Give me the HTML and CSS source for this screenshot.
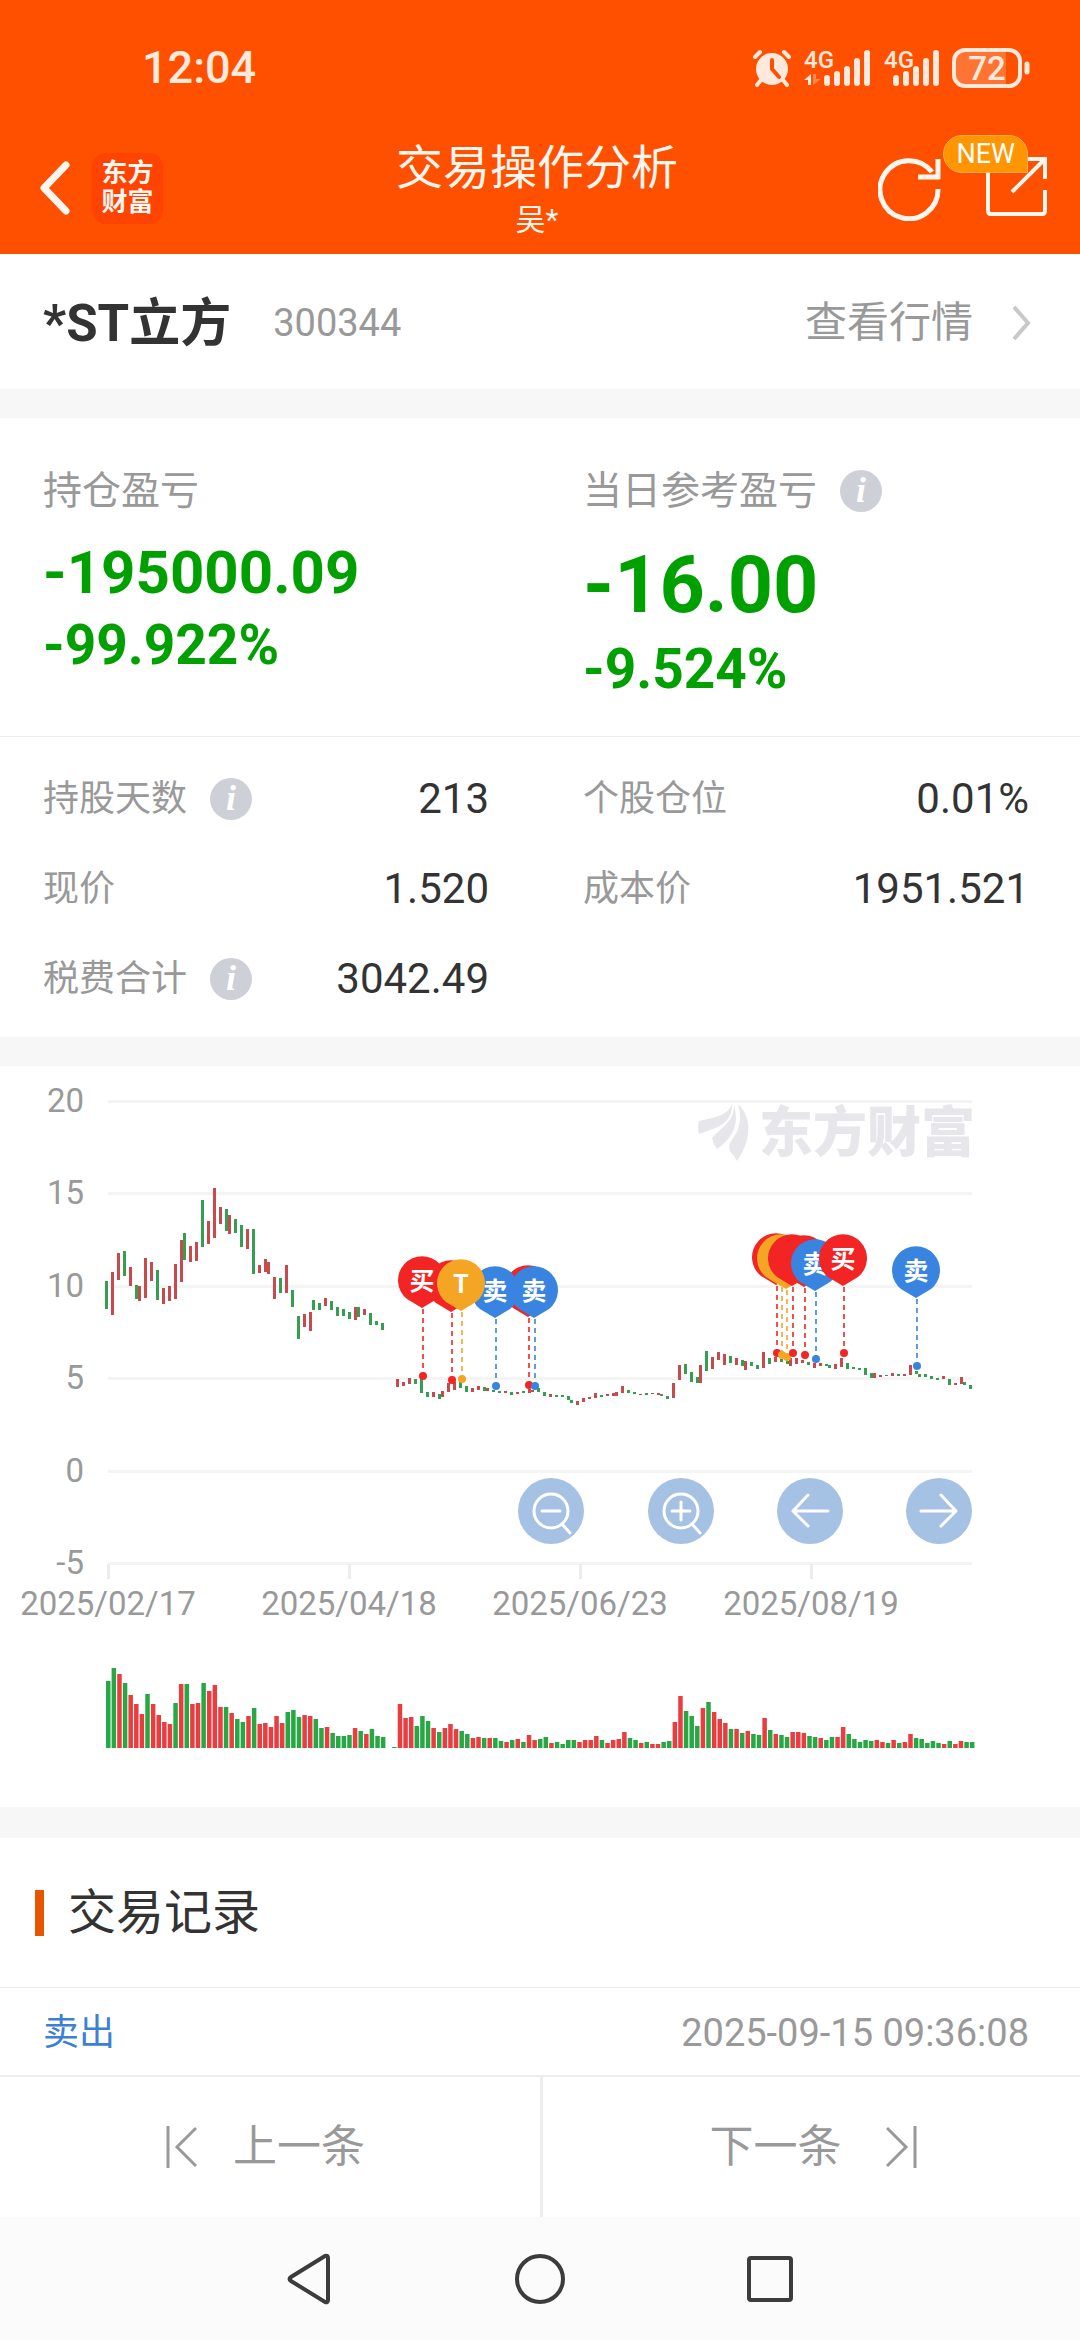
FILE: index.html
```html
<!DOCTYPE html>
<html lang="zh-CN">
<head>
    <meta charset="UTF-8">
    <meta name="viewport" content="width=device-width, initial-scale=1.0">
    <title>交易操作分析</title>
    <link rel="stylesheet" href="styles.css">
</head>
<body>
    <header class="header">
        <div class="status-bar">
            <span class="clock">12:04</span>
            <div class="status-icons">
                <svg width="40" height="44" viewBox="0 -4 40 44">
                    <g fill="none" stroke="#ffe9dd" stroke-width="4" stroke-linecap="round">
                        <path d="M3 9l5-5M37 9l-5-5M9 32l-4 5M31 32l4 5"/>
                    </g>
                    <circle cx="20" cy="21" r="16" fill="#ffe9dd"/>
                    <path d="M20 12v9l7 8" fill="none" stroke="#ff5000" stroke-width="4" stroke-linecap="round" stroke-linejoin="round"/>
                </svg>
                <svg width="68" height="44" viewBox="0 -4 68 44">
                    <text class="net-label" x="0" y="20">4G</text>
                    <path d="M7 26v11H4v-5H0z" fill="#ffe9dd"/>
                    <path d="M9 37V26h3v5h5z" fill="#ff8a50"/>
                    <path d="M23 30v5M33 26v9M43 21v14M53 13v22M63 5v30" stroke="#ffe9dd" stroke-width="6" stroke-linecap="round"/>
                </svg>
                <svg width="56" height="44" viewBox="0 -4 56 44">
                    <text class="net-label" x="0" y="20">4G</text>
                    <path d="M12 30v5M22 26v9M32 21v14M42 13v22M52 5v30" stroke="#ffe9dd" stroke-width="6" stroke-linecap="round"/>
                </svg>
                <svg width="80" height="44" viewBox="0 -4 80 44">
                    <path d="M12 3H54V37H12Q3 37 3 28V12Q3 3 12 3z" fill="#ff7333"/>
                    <rect x="2" y="2" width="66" height="36" rx="11" fill="none" stroke="#ffe9dd" stroke-width="4"/>
                    <path d="M75 16v8" stroke="#ffe9dd" stroke-width="5" stroke-linecap="round"/>
                    <text class="battery-label" x="35" y="32">72</text>
                </svg>
            </div>
        </div>
        <div class="title-bar">
            <div class="title-left">
                <button class="icon-btn" aria-label="返回">
                    <svg width="44" height="54" viewBox="-12 0 44 54"><path d="M28 4L6 27l22 23" fill="none" stroke="#fff6f0" stroke-width="7" stroke-linecap="round" stroke-linejoin="round"/></svg>
                </button>
                <div class="brand">东方<br>财富</div>
            </div>
            <div class="title-center">
                <h1>交易操作分析</h1>
                <p>吴*</p>
            </div>
            <div class="title-right">
                <button class="icon-btn" aria-label="刷新">
                    <svg width="64" height="66" viewBox="0 0 64 66"><path d="M60 34a29 29 0 1 1-6-17M60 4v20M40 22h22" fill="none" stroke="#fff6f0" stroke-width="5"/></svg>
                </button>
                <button class="icon-btn share" aria-label="分享">
                    <svg width="64" height="66" viewBox="0 0 64 66"><path d="M4 10v46q0 3 3 3h51q3 0 3-3V35M61 24V4H42M61 4L28 37" fill="none" stroke="#fff6f0" stroke-width="4"/></svg>
                    <span class="badge">NEW</span>
                </button>
            </div>
        </div>
    </header>

    <section class="stock">
        <h2>*ST立方</h2>
        <span class="code">300344</span>
        <a class="quote-link" href="#">查看行情
            <svg width="18" height="36" viewBox="0 0 18 36"><path d="M1 2l14 16L1 34" fill="none" stroke="#c8c8c8" stroke-width="4"/></svg>
        </a>
    </section>

    <section class="panel">
        <div class="profit">
            <div class="profit-col">
                <div class="label large">持仓盈亏</div>
                <div class="amount">-195000.09</div>
                <div class="percent">-99.922%</div>
            </div>
            <div class="profit-col">
                <div class="label large">当日参考盈亏 <i class="info">i</i></div>
                <div class="amount today">-16.00</div>
                <div class="percent">-9.524%</div>
            </div>
        </div>
        <div class="metrics">
            <div class="metric"><span class="label">持股天数 <i class="info">i</i></span><b>213</b></div>
            <div class="metric"><span class="label">个股仓位</span><b>0.01%</b></div>
            <div class="metric"><span class="label">现价</span><b>1.520</b></div>
            <div class="metric"><span class="label">成本价</span><b>1951.521</b></div>
            <div class="metric"><span class="label">税费合计 <i class="info">i</i></span><b>3042.49</b></div>
        </div>
    </section>

    <section class="panel chart">
        <svg class="chart-svg" viewBox="0 66 1080 741">
            <g id="grid"></g>
            <g fill="#e6e6eb">
                <path d="M732 104C728 116 712 118 699 121Q697 127 699 134C716 128 733 124 732 104z"/>
                <path d="M734 105C734 122 721 128 712 138Q713 144 717 149C731 139 740 127 734 105z"/>
                <path d="M738 104C753 118 751 141 737 161C734 154 729 153 729 146C732 136 745 130 738 104z"/>
                <text class="watermark" x="759" y="152">东方财富</text>
            </g>
            <g id="candles"></g>
            <g id="volumes"></g>
            <g id="pins"></g>
        </svg>
        <div class="chart-tools">
            <button aria-label="缩小"><svg viewBox="0 0 66 66"><circle cx="33" cy="33" r="17"/><path d="M24 33h18M44 46l8 9"/></svg></button>
            <button aria-label="放大"><svg viewBox="0 0 66 66"><circle cx="33" cy="33" r="17"/><path d="M24 33h18M33 24v18M44 46l8 9"/></svg></button>
            <button aria-label="向左"><svg viewBox="0 0 66 66"><path d="M51 33H16M31 17L16 33l15 15"/></svg></button>
            <button aria-label="向右"><svg viewBox="0 0 66 66"><path d="M15 33h35M35 17l15 16-15 15"/></svg></button>
        </div>
    </section>

    <section class="panel records">
        <h3>交易记录</h3>
        <div class="record">
            <span class="side">卖出</span>
            <time>2025-09-15 09:36:08</time>
        </div>
    </section>

    <div class="pager">
        <button>
            <svg width="32" height="44" viewBox="0 0 32 44"><path d="M3 1v42M31 3L12 22l19 19" fill="none" stroke="#999" stroke-width="3"/></svg>
            上一条
        </button>
        <button>
            下一条
            <svg width="32" height="44" viewBox="0 0 32 44"><path d="M29 1v42M1 3l19 19L1 41" fill="none" stroke="#999" stroke-width="3"/></svg>
        </button>
    </div>

    <nav class="system-nav">
        <button class="icon-btn" aria-label="返回"><svg width="52" height="52" viewBox="0 0 52 52"><path d="M41 3L7 24q-3 2 0 4l34 21q3 1 3-2V5q0-3-3-2z"/></svg></button>
        <button class="icon-btn" aria-label="主页"><svg width="52" height="52" viewBox="0 0 52 52"><circle cx="26" cy="26" r="23"/></svg></button>
        <button class="icon-btn" aria-label="最近任务"><svg width="52" height="52" viewBox="0 0 52 52"><rect x="5" y="5" width="42" height="42" rx="2"/></svg></button>
    </nav>

    <script src="chart.js"></script>
</body>
</html>
```
FILE: styles.css
```css
* {
    margin: 0;
    padding: 0;
    box-sizing: border-box;
}

body {
    font-family: Roboto, "Noto Sans CJK SC", sans-serif;
    line-height: 1.2;
    background: #f7f7f7;
    color: #333;
    min-height: 100vh;
    display: flex;
    flex-direction: column;
}

button {
    font-family: inherit;
    line-height: inherit;
    background: none;
    border: none;
    cursor: pointer;
}

svg {
    display: block;
}

/* header */

.header {
    background: #ff5000;
    color: #fff6f0;
    height: 254px;
}

.status-bar {
    display: flex;
    justify-content: space-between;
    align-items: flex-end;
    padding: 44px 48px 0 142px;
}

.clock {
    font-size: 45px;
    line-height: 40px;
    color: #ffe9dd;
    font-weight: 500;
}

.status-icons {
    display: flex;
    gap: 12px;
}

.net-label {
    font-size: 24px;
    font-weight: 500;
    fill: #ffe9dd;
}

.battery-label {
    font-size: 33px;
    font-weight: 500;
    fill: #ffe9dd;
    text-anchor: middle;
}

.title-bar {
    display: grid;
    grid-template-columns: 1fr auto 1fr;
    align-items: center;
    padding: 48px 32px 0 26px;
}

.title-left,
.title-right {
    display: flex;
    align-items: center;
    gap: 22px;
}

.title-right {
    justify-content: flex-end;
    gap: 42px;
}

.brand {
    width: 71px;
    height: 71px;
    padding-top: 6px;
    border-radius: 14px;
    background: #ff4300;
    font-size: 26px;
    line-height: 29px;
    font-weight: 700;
    text-align: center;
}

.title-center {
    text-align: center;
}

.title-center h1 {
    font-size: 47px;
    line-height: 64px;
    font-weight: 400;
}

.title-center p {
    font-size: 30px;
    line-height: 40px;
}

.share {
    position: relative;
}

.badge {
    position: absolute;
    right: 20px;
    top: -20px;
    padding: 0 12px;
    font-size: 27px;
    line-height: 36px;
    color: #fff;
    background: #ff9500;
    border: 1px solid #ffb04d;
    border-radius: 20px 20px 0 20px;
}

/* stock row */

.stock {
    display: flex;
    align-items: center;
    height: 135px;
    padding: 4px 49px 0 43px;
    background: #fff;
}

.stock h2 {
    font-size: 51px;
    font-weight: 700;
}

.code {
    margin-left: 42px;
    font-size: 38px;
    color: #999;
}

.quote-link {
    display: flex;
    align-items: center;
    gap: 40px;
    margin-left: auto;
    font-size: 42px;
    color: #999;
    text-decoration: none;
}

/* panels */

.panel {
    margin-top: 29px;
    background: #fff;
}

.label {
    display: flex;
    align-items: center;
    gap: 23px;
    font-size: 36px;
    line-height: 44px;
    color: #999;
}

.label.large {
    font-size: 39px;
}

.info {
    width: 42px;
    height: 42px;
    border-radius: 50%;
    background: #cdd0d6;
    color: #fff;
    font: italic bold 36px/40px "Liberation Serif", serif;
    text-align: center;
}

.profit,
.metrics {
    display: grid;
    grid-template-columns: 1fr 1fr;
}

.profit {
    height: 319px;
    padding-top: 51px;
    border-bottom: 1px solid #ededed;
}

.profit-col {
    padding-left: 43px;
}

.amount {
    margin-top: 22px;
    font-size: 60px;
    line-height: 76px;
    font-weight: 700;
    color: #00a000;
}

.amount.today {
    font-size: 79px;
    line-height: 100px;
}

.percent {
    font-size: 55px;
    line-height: 68px;
    font-weight: 700;
    color: #00a000;
}

.metrics {
    padding: 17px 0 13px;
}

.metric {
    display: flex;
    justify-content: space-between;
    align-items: center;
    height: 90px;
    padding: 0 51px 0 43px;
}

.metric b {
    font-size: 42px;
    font-weight: 400;
}

/* chart */

.chart {
    position: relative;
}

.chart-svg {
    width: 100%;
    height: auto;
}

.axis {
    font-size: 33px;
    fill: #999;
}

.watermark {
    font-size: 54px;
    font-weight: 900;
}

.pin-text {
    font-size: 25px;
    font-weight: 700;
    fill: #fff;
    text-anchor: middle;
}

.chart-tools {
    position: absolute;
    left: 48%;
    right: 10%;
    top: 412px;
    display: flex;
    justify-content: space-between;
}

.chart-tools button {
    width: 66px;
    height: 66px;
    border-radius: 50%;
    background: #a5c1e3;
}

.chart-tools svg {
    fill: none;
    stroke: #fff;
    stroke-width: 3;
    stroke-linecap: round;
    stroke-linejoin: round;
}

/* records */

.records {
    margin-top: 31px;
    flex: 1;
}

.records h3 {
    display: flex;
    align-items: center;
    gap: 24px;
    height: 150px;
    padding-left: 35px;
    font-size: 48px;
    font-weight: 400;
    border-bottom: 1px solid #ededed;
}

.records h3::before {
    content: "";
    width: 9px;
    height: 46px;
    background: #e85500;
}

.record {
    display: flex;
    justify-content: space-between;
    align-items: center;
    height: 87px;
    padding: 4px 51px 0 43px;
    font-size: 36px;
}

.side {
    color: #3d80d3;
}

.record time {
    font-size: 38px;
    color: #999;
}

/* bottom */

.pager {
    display: flex;
    background: #fff;
    border-top: 2px solid #ededed;
}

.pager button {
    width: 50%;
    display: flex;
    justify-content: center;
    align-items: center;
    gap: 36px;
    height: 140px;
    padding-right: 10px;
    font-size: 44px;
    color: #999;
}

.pager button + button {
    border-left: 3px solid #ededed;
    gap: 44px;
    padding: 0 0 0 4px;
}

.system-nav {
    display: flex;
    justify-content: center;
    align-items: center;
    gap: 178px;
    height: 123px;
    background: #fbfbfb;
}

.system-nav svg {
    fill: none;
    stroke: #3c3c3c;
    stroke-width: 4;
}
```
FILE: chart.js
```js
const RED = '#c94a4c';
const GREEN = '#369e50';
const PIN = { b: '#f22424', s: '#3884e0', t: '#f5a524' };

// direction, x, top, bottom
const candles = `
g105,281,309 r111,272,315 r117,253,280 g123,251,276 r129,267,286 g135,285,299 r138,286,301 r144,258,298
r150,262,281 g156,270,300 r162,288,304 r168,286,301 r174,264,299 r180,240,282 g183,233,260 r189,246,262
r195,242,261 g201,200,247 r207,221,244 r213,188,238 r219,207,224 g225,209,231 r228,215,234 g234,219,233
g240,225,247 r246,229,249 g252,229,274 r258,265,273 r264,259,272 r267,262,274 r273,277,299 g279,278,293
r285,265,293 g291,290,307 g297,316,339 r303,314,327 r309,312,331 g312,300,310 g318,303,310 r324,298,306
g330,301,310 g336,307,316 g342,309,316 g348,312,319 r354,307,320 g357,307,317 r363,309,315 g369,313,325
g375,321,325 g381,323,330
r396,379,387 r402,382,386 r408,378,384 g414,379,384 g420,379,393 g426,392,397 r432,392,397 g438,394,399
r441,391,397 r447,383,392 r453,382,390 g459,382,388 g465,386,392 r471,388,392 r477,386,390 g483,387,391
r486,388,391 g492,390,392 g498,391,393 r504,391,393 g510,392,395 r516,392,394 g522,391,393 r528,389,393
r531,390,392 g537,388,392 g543,392,396 r549,394,397 g555,395,397 g561,395,397 g567,396,400 g570,400,403
r576,401,405 r582,398,402 r588,397,399 r594,393,398 g600,395,397 r606,394,396 r612,393,396 r615,392,396
r621,386,393 g627,390,393 g633,392,394 r639,394,395 g645,393,395 r651,393,394 r657,393,395 g660,394,396
g666,396,399 r672,383,398 r678,365,380 g684,364,374 g690,372,382 g696,377,383 r699,365,383 g705,351,371
r711,357,369 r717,352,360 r723,354,365 g729,356,363 r735,358,365 g741,360,366 r744,361,370 g750,362,366
g756,365,369 r762,352,368 g768,358,364 r774,357,362 g780,359,362 g786,361,364 r789,358,366 r795,358,364
r801,360,363 g807,362,365 r813,363,368 r819,363,366 g825,364,366 g828,365,368 r834,364,369 r840,358,367
g846,363,369 g852,367,369 g858,368,370 g864,368,375 g870,373,378 r873,373,378 r879,375,377 g885,375,376
r891,373,376 g897,374,376 r903,374,376 r909,365,375 g915,371,374 g918,374,377 g924,374,377 g930,376,379
g936,378,380 r942,376,379 g948,379,385 r954,383,385 r960,377,384 g963,382,385 g969,385,389`;

// positive = up day, negative = down day
const volumes = [
    -67, -80, 74, -65, 53, 44, 34, -54, 44, 33, 26, 24, -45, 64, -64, 44, 45, -65, 57, 63,
    41, -41, 35, -29, -26, 32, -40, 24, 25, 21, 32, 25, -36, -38, -31, 33, 32, -29, -20, 21,
    -15, -12, -12, -13, 20, -17, 14, -19, -12, -11, 0, -1, 44, 30, 31, -22, -32, -27, 20, -16,
    20, 24, 19, -17, -14, 10, 11, -10, 10, -10, -7, 6, -8, 9, -6, 13, 8, -9, -11, 5,
    -6, -4, -8, -8, 6, 8, 8, 12, -8, 5, 8, 9, 16, -10, -8, 5, -6, 4, 4, -6,
    -7, 26, 52, -37, -32, -22, 40, -46, 36, 29, 25, -19, 19, -15, 17, -14, -13, 30, -18, 14,
    -13, -11, 16, 16, 15, -12, -11, 10, -8, -11, 11, 21, -14, -9, -6, -8, -7, 8, 6, -5,
    8, -5, 6, 14, -10, -9, -5, -7, -5, 4, -7, 4, 7, -6, -6
];

// type, x, head centre, dot, label (only the front pins of a cluster are labelled)
const pins = [
    ['b', 451, 285, 380, ''], ['b', 528, 290, 385, ''], ['b', 422, 281, 376, '买'],
    ['s', 495, 291, 386, '卖'], ['t', 461, 284, 379, 'T'], ['s', 534, 291, 386, '卖'],
    ['b', 776, 258, 353, ''], ['t', 781, 259, 355, ''], ['t', 786, 262, 357, ''],
    ['b', 792, 259, 353, ''], ['b', 804, 260, 355, ''], ['s', 815, 264, 359, '卖'],
    ['b', 843, 259, 353, '买'], ['s', 916, 271, 366, '卖']
];

function rect(x, y, w, h, fill) {
    return `<rect x="${x}" y="${y}" width="${w}" height="${h}" fill="${fill}"/>`;
}

let grid = '';
[20, 15, 10, 5, 0, -5].forEach((value, i) => {
    const y = 100 + Math.round(i * 92.4);
    grid += rect(108, y, 864, 3, '#f4f4f4');
    grid += `<text class="axis" x="84" y="${y + 12}" text-anchor="end">${value}</text>`;
});
[[108, '2025/02/17'], [349, '2025/04/18'], [580, '2025/06/23'], [811, '2025/08/19']].forEach(([x, date]) => {
    grid += rect(x - 1, 564, 3, 15, '#ededed');
    grid += `<text class="axis" x="${x}" y="615" text-anchor="middle">${date}</text>`;
});
document.getElementById('grid').innerHTML = grid;

document.getElementById('candles').innerHTML = candles.trim().split(/\s+/).map(item => {
    const [x, top, bottom] = item.slice(1).split(',').map(Number);
    return rect(x, top, 3, bottom - top, item[0] === 'r' ? RED : GREEN);
}).join('');

document.getElementById('volumes').innerHTML = volumes.map((v, i) => {
    const h = Math.abs(v);
    return rect(106 + i * 5.61, 748 - h, 4.5, h, v > 0 ? '#e93d40' : '#28a745');
}).join('');

const lines = pins.map(([type, x, y, dot]) =>
    `<path d="M${x + 1} ${y + 28}V${dot}" stroke="${PIN[type]}" stroke-width="2" stroke-dasharray="5 4" opacity="0.8"/>
     <circle cx="${x + 1}" cy="${dot}" r="4" fill="${PIN[type]}"/>`);
const heads = pins.map(([type, x, y, dot, label]) => {
    const head = `<path d="M${x} ${y + 27}L${x - 15} ${y + 18}A24 24 0 1 1 ${x + 15} ${y + 18}z" fill="${PIN[type]}"/>`;
    return label ? head + `<text class="pin-text" x="${x}" y="${y + 9}">${label}</text>` : head;
});
document.getElementById('pins').innerHTML = lines.join('') + heads.join('');
```
